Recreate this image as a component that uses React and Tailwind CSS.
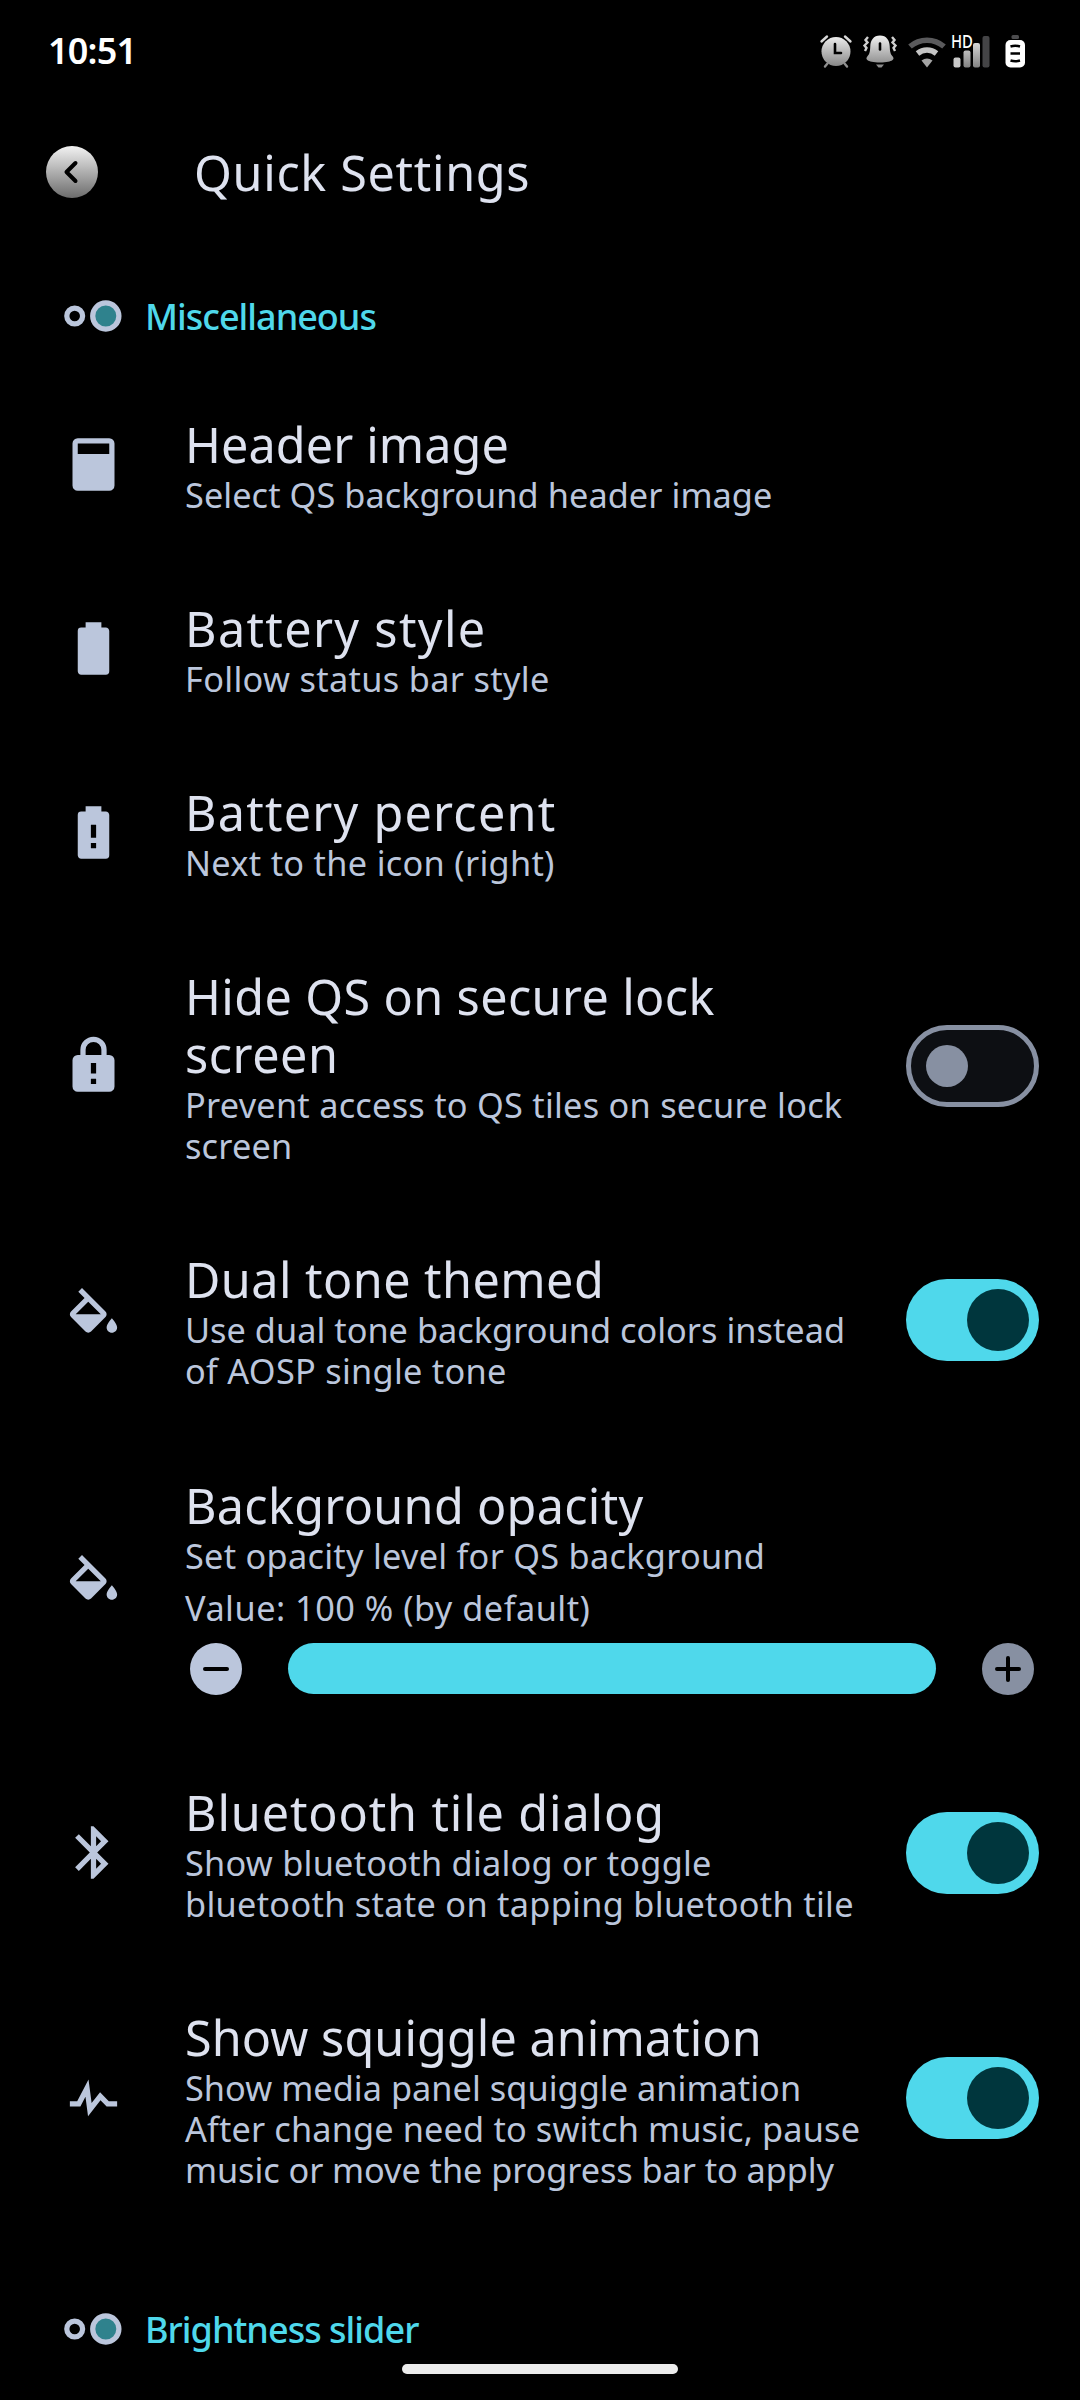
const PATHS = {
  header: "M6 2h12a2 2 0 0 1 2 2v16a2 2 0 0 1-2 2H6a2 2 0 0 1-2-2V4a2 2 0 0 1 2-2zM6 4v4h12V4z",
  battery: "M16.67 4H15V2H9v2H7.33A1.33 1.33 0 0 0 6 5.33v15.34C6 21.4 6.6 22 7.33 22h9.34A1.33 1.33 0 0 0 18 20.67V5.33C18 4.6 17.4 4 16.67 4z",
  batteryAlert: "M16.67 4H15V2H9v2H7.33A1.33 1.33 0 0 0 6 5.33v15.34C6 21.4 6.6 22 7.33 22h9.34A1.33 1.33 0 0 0 18 20.67V5.33C18 4.6 17.4 4 16.67 4zM11 9v5h2V9zM11 16v2h2v-2z",
  lock: "M6 8h1V6a5 5 0 0 1 10 0v2h1a2 2 0 0 1 2 2v10a2 2 0 0 1-2 2H6a2 2 0 0 1-2-2V10a2 2 0 0 1 2-2zM9 6v2h6V6a3 3 0 0 0-6 0zM11 11v4h2v-4zM11 17v2h2v-2z",
  fill: "M16.56 8.94L7.62 0 6.21 1.41l2.38 2.38-5.15 5.15c-.59.59-.59 1.54 0 2.12l5.5 5.5c.29.29.68.44 1.06.44s.77-.15 1.06-.44l5.5-5.5c.59-.58.59-1.53 0-2.12zM5.21 10L10 5.21 14.79 10H5.21zM19 11.5s-2 2.17-2 3.5c0 1.1.9 2 2 2s2-.9 2-2c0-1.33-2-3.5-2-3.5z",
  bluetooth: "M17.71 7.71L12 2h-1v7.59L6.41 5 5 6.41 10.59 12 5 17.59 6.41 19 11 14.41V22h1l5.71-5.71-4.3-4.29 4.3-4.29zM13 5.83l1.88 1.88L13 9.59V5.83zm1.88 10.46L13 18.17v-3.76l1.88 1.88z",
  pulse: "M3 13h2.79l4.31-8.21 1.18 8.96 3.22-4.09L17.83 13H21v2h-4l-2.33-2.33-4.75 6.06-.98-7.42L7 15H3v-2z",
};

const ROWS = [
  { icon: "header", h: "h-[184px]", title: [["Header image", "tracking-[0.12px]"]], sub: [["Select QS background header image", "tracking-[0.06px]"]] },
  { icon: "battery", h: "h-[184px]", title: [["Battery style", "tracking-[1.36px]"]], sub: [["Follow status bar style", "tracking-[0.33px]"]] },
  { icon: "batteryAlert", h: "h-[184px]", title: [["Battery percent", "tracking-[1.24px]"]], sub: [["Next to the icon (right)", "tracking-[0.3px]"]] },
  {
    icon: "lock", h: "h-[283px]", toggle: "off",
    title: [["Hide QS on secure lock", "tracking-[0.39px]"], ["screen", "tracking-[0.54px]"]],
    sub: [["Prevent access to QS tiles on secure lock", "tracking-[0.25px]"], ["screen", "tracking-[0.19px]"]],
  },
  {
    icon: "fill", h: "h-[225px]", toggle: "on",
    title: [["Dual tone themed", "tracking-[0.46px]"]],
    sub: [["Use dual tone background colors instead", "tracking-[0.02px]"], ["of AOSP single tone", "tracking-[0.28px]"]],
  },
  {
    icon: "fill", h: "h-[308px]", slider: true,
    title: [["Background opacity", "tracking-[0.31px]"]],
    sub: [["Set opacity level for QS background", "tracking-[0.27px]"]],
  },
  {
    icon: "bluetooth", h: "h-[225px]", toggle: "on",
    title: [["Bluetooth tile dialog", "tracking-[0.88px]"]],
    sub: [["Show bluetooth dialog or toggle", "tracking-[0.25px]"], ["bluetooth state on tapping bluetooth tile", "tracking-[0.3px]"]],
  },
  {
    icon: "pulse", h: "h-[266px]", toggle: "on",
    title: [["Show squiggle animation", "tracking-[0.08px]"]],
    sub: [
      ["Show media panel squiggle animation", "tracking-[0.04px]"],
      ["After change need to switch music, pause", "tracking-[0.14px]"],
      ["music or move the progress bar to apply", "tracking-[-0.07px]"],
    ],
  },
];

function Toggle({ state }) {
  return state === "on" ? (
    <div className="flex h-[82px] w-[133px] items-center justify-end rounded-full bg-[#4fd8eb] pr-[10px]">
      <div className="size-[62px] rounded-full bg-[#00363d]" />
    </div>
  ) : (
    <div className="flex h-[82px] w-[133px] items-center rounded-full border-[5px] border-[#8790a2] bg-[#0d0f13] pl-[15px]">
      <div className="size-[42px] rounded-full bg-[#8790a2]" />
    </div>
  );
}

function OpacitySlider() {
  return (
    <div className="mt-[15px] flex h-[52px] items-center pl-[5px]">
      <svg viewBox="0 0 52 52" className="size-[52px]">
        <circle cx="26" cy="26" r="26" fill="#bbc6dc" />
        <path d="M15 26h22" stroke="#000" strokeWidth="4" strokeLinecap="round" />
      </svg>
      <div className="ml-[46px] h-[51px] w-[648px] self-start rounded-full bg-[#4fd8eb]" />
      <svg viewBox="0 0 52 52" className="ml-[46px] size-[52px]">
        <circle cx="26" cy="26" r="26" fill="#8790a2" />
        <path d="M15 26h22M26 15v22" stroke="#000" strokeWidth="4" strokeLinecap="round" />
      </svg>
    </div>
  );
}

function Row({ row }) {
  return (
    <div className={`flex items-center pl-[61.5px] pr-[41px] ${row.h}`}>
      <svg viewBox="0 0 24 24" className="size-[63px] shrink-0" fill="#bbc6dc" fillRule="evenodd">
        <path d={PATHS[row.icon]} />
      </svg>
      <div className={`ml-[60.5px] grow ${row.slider ? "pb-px" : "pt-[2px]"}`}>
        {row.title.map(([t, tr]) => (
          <div key={t} className={`whitespace-nowrap text-[48.5px] leading-[58px] text-[#dee2ef] ${tr}`}>{t}</div>
        ))}
        <div className="pt-px">
          {row.sub.map(([t, tr]) => (
            <div key={t} className={`whitespace-nowrap text-[34.3px] leading-[41px] text-[#bbc6dc] ${tr}`}>{t}</div>
          ))}
        </div>
        {row.slider && (
          <>
            <div className="mt-[11px] whitespace-nowrap text-[34.3px] leading-[41px] tracking-[0.49px] text-[#bbc6dc]">Value: 100 % (by default)</div>
            <OpacitySlider />
          </>
        )}
      </div>
      {row.toggle && <Toggle state={row.toggle} />}
    </div>
  );
}

function Section({ children, className }) {
  return (
    <div className={`flex items-center pl-[64px] font-medium text-[36px] leading-[48px] text-[#4fd8eb] ${className}`}>
      <svg viewBox="0 0 60 36" className="h-[36px] w-[60px]" fill="none" stroke="#bbc6dc" strokeWidth="5.25">
        <circle cx="10.7" cy="18" r="7.9" />
        <circle cx="41.8" cy="18" r="13.1" fill="#2f828d" />
      </svg>
      <span className="ml-[21px] whitespace-nowrap pt-[2px]">{children}</span>
    </div>
  );
}

function StatusIcons() {
  return (
    <svg viewBox="0 0 210 40" className="h-[40px] w-[210px] overflow-visible">
      <defs>
        <linearGradient id="silver" gradientUnits="userSpaceOnUse" x1="0" y1="4" x2="0" y2="36">
          <stop offset="0" stopColor="#f2f2f2" />
          <stop offset="1" stopColor="#848484" />
        </linearGradient>
      </defs>
      {/* alarm clock */}
      <g>
        <circle cx="16" cy="20.5" r="14.5" fill="url(#silver)" />
        <path d="M1.5 10.5L7 5.5M25 5.5l5.500 5" stroke="#d8d8d8" strokeWidth="2.4" strokeLinecap="round" />
        <path d="M7.500 32.500L5 35.500M24.500 32.500l2.500 3" stroke="#909090" strokeWidth="2.4" strokeLinecap="round" />
        <path d="M15 13v9h6" stroke="#000" strokeWidth="2.600" fill="none" strokeLinecap="round" />
      </g>
      {/* ringing bell */}
      <path d="M60 4.500c6.500 0 9.500 5 9.700 10.500.2 6 .8 8 3 10.500 2 2.500 1.300 5.500-12.700 6-14-.5-14.700-3.500-12.700-6 2.200-2.500 2.800-4.500 3-10.500C50.500 9.500 53.500 4.500 60 4.500z" fill="url(#silver)" />
      <path d="M60 12.500v6" stroke="#000" strokeWidth="2.600" strokeLinecap="round" />
      <path d="M56 33.500h8l-2.500 3h-3z" fill="#8a8a8a" />
      <path d="M48 6l-2.500 3 2 2.500-3 3 2 2.500-1.500 3M72 6l2.500 3-2 2.500 3 3-2 2.500 1.500 3" stroke="#d0d0d0" strokeWidth="2.400" fill="none" />
      {/* wifi */}
      <path d="M90 15.500a26 26 0 0 1 34 0" stroke="#5a5a5c" strokeWidth="5.500" fill="none" />
      <path d="M97.500 22.500a15 15 0 0 1 19 0" stroke="#c4c4c4" strokeWidth="5.500" fill="none" />
      <path d="M101.500 29.500q5.500-4 11 0L107 36.500z" fill="#a4a4a4" />
      {/* signal */}
      <rect x="133.500" y="26.500" width="7" height="10" rx="2" fill="#c8c8c8" />
      <rect x="143.500" y="19.500" width="7" height="17" rx="2" fill="url(#silver)" />
      <rect x="153" y="12" width="7" height="24.500" rx="2" fill="url(#silver)" />
      <rect x="162.500" y="5" width="7" height="31.500" rx="2" fill="#444446" />
      <text x="131" y="17" fontSize="17.500" fontWeight="500" fill="#fff" stroke="#000" strokeWidth="1.500" paintOrder="stroke" textLength="22" lengthAdjust="spacingAndGlyphs">HD</text>
      {/* battery */}
      <rect x="191.500" y="4" width="7.500" height="4" rx="1.500" fill="#4c4c4e" />
      <rect x="185.500" y="9" width="19.500" height="27.500" rx="5" fill="#fff" />
      <path d="M190.500 15.500q4.700-1.500 9.500 0M190.500 22.500h9.500M190.500 29.500q4.700 1.500 9.500 0" stroke="#000" strokeWidth="2.400" fill="none" />
    </svg>
  );
}

export default function App() {
  return (
    <div className="relative flex h-[2400px] w-[1080px] flex-col overflow-hidden bg-black font-['Noto_Sans','Open_Sans',sans-serif]">
      <div className="flex h-[101px] items-center justify-between pl-[48px] pr-[50px]">
        <span className="pt-px font-semibold text-[36px] leading-[48px] tracking-[-0.8px] text-white">10:51</span>
        <StatusIcons />
      </div>
      <div className="mt-px flex h-[140px] items-center pl-[46px]">
        <svg viewBox="0 0 52 52" className="size-[52px]">
          <defs>
            <linearGradient id="knob" x1="0" y1="0" x2="0" y2="1">
              <stop offset="0" stopColor="#f2f2f2" />
              <stop offset="1" stopColor="#6c6c6c" />
            </linearGradient>
          </defs>
          <circle cx="26" cy="26" r="26" fill="url(#knob)" />
          <path d="M29.500 17l-9 9 9 9" stroke="#000" strokeWidth="4" fill="none" strokeLinecap="round" strokeLinejoin="round" />
        </svg>
        <h1 className="ml-[96px] text-[48.5px] leading-[58px] tracking-[0.68px] text-[#dee2ef]">Quick Settings</h1>
      </div>
      <Section className="h-[130px] pt-[17px] tracking-[-1px]">Miscellaneous</Section>
      {ROWS.map((row) => (
        <Row key={row.title[0][0]} row={row} />
      ))}
      <Section className="h-[161px] pt-[35px] tracking-[-0.97px]">Brightness slider</Section>
      <div className="absolute bottom-[26px] left-[402px] h-[10px] w-[276px] rounded-full bg-[#ececec]" />
    </div>
  );
}
